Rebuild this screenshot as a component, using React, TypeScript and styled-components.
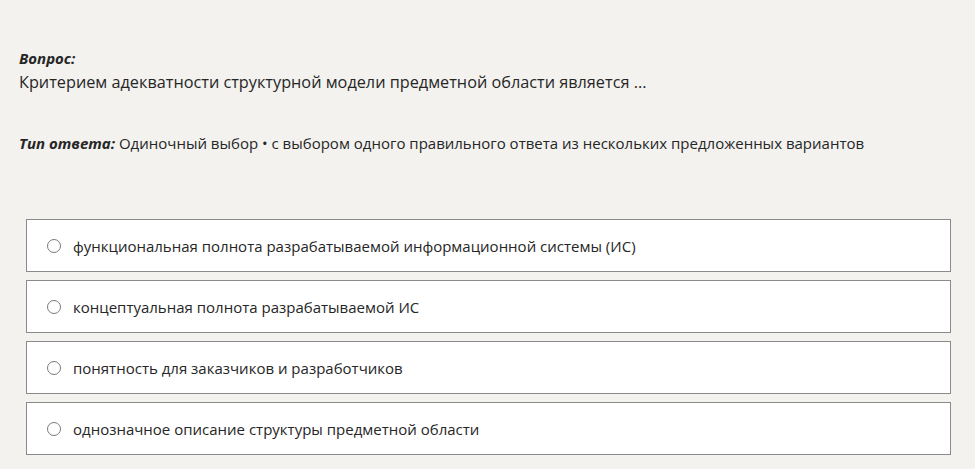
import React from "react";
import styled, { createGlobalStyle } from "styled-components";

const GlobalStyle = createGlobalStyle`
  html, body {
    margin: 0;
    padding: 0;
    background: #f3f2ef;
  }
  body {
    font-family: "Open Sans", "Noto Sans", sans-serif;
    color: #262626;
  }
`;

const Page = styled.div`
  padding: 48px 24px 0 19px;
`;

const Label = styled.div`
  font-size: 15px;
  font-weight: 700;
  font-style: italic;
  line-height: 20px;
`;

const QuestionText = styled.div`
  font-size: 16.25px;
  line-height: 24px;
  margin-top: 2px;
`;

const AnswerType = styled.div`
  margin-top: 37px;
  font-size: 15px;
  line-height: 24px;

  b {
    font-style: italic;
  }
`;

const Options = styled.div`
  display: flex;
  flex-direction: column;
  gap: 8px;
  margin-top: 64px;
  margin-left: 7px;
`;

const Option = styled.label`
  display: flex;
  align-items: center;
  gap: 12px;
  height: 53px;
  box-sizing: border-box;
  padding: 0 0 0 20px;
  background: #fff;
  border: 1px solid #8a8a8a;
  font-size: 15px;
  cursor: pointer;
`;

const Radio = styled.span`
  width: 12px;
  height: 12px;
  border: 1px solid #7a7a7a;
  border-radius: 50%;
  flex: none;
  background: #fff;
`;

const answers = [
  "функциональная полнота разрабатываемой информационной системы (ИС)",
  "концептуальная полнота разрабатываемой ИС",
  "понятность для заказчиков и разработчиков",
  "однозначное описание структуры предметной области",
];

const App: React.FC = () => (
  <>
    <GlobalStyle />
    <Page>
      <Label>Вопрос:</Label>
      <QuestionText>Критерием адекватности структурной модели предметной области является ...</QuestionText>
      <AnswerType>
        <b>Тип ответа:</b> Одиночный выбор • с выбором одного правильного ответа из нескольких предложенных вариантов
      </AnswerType>
      <Options>
        {answers.map((a) => (
          <Option key={a}>
            <Radio />
            <span>{a}</span>
          </Option>
        ))}
      </Options>
    </Page>
  </>
);

export default App;
